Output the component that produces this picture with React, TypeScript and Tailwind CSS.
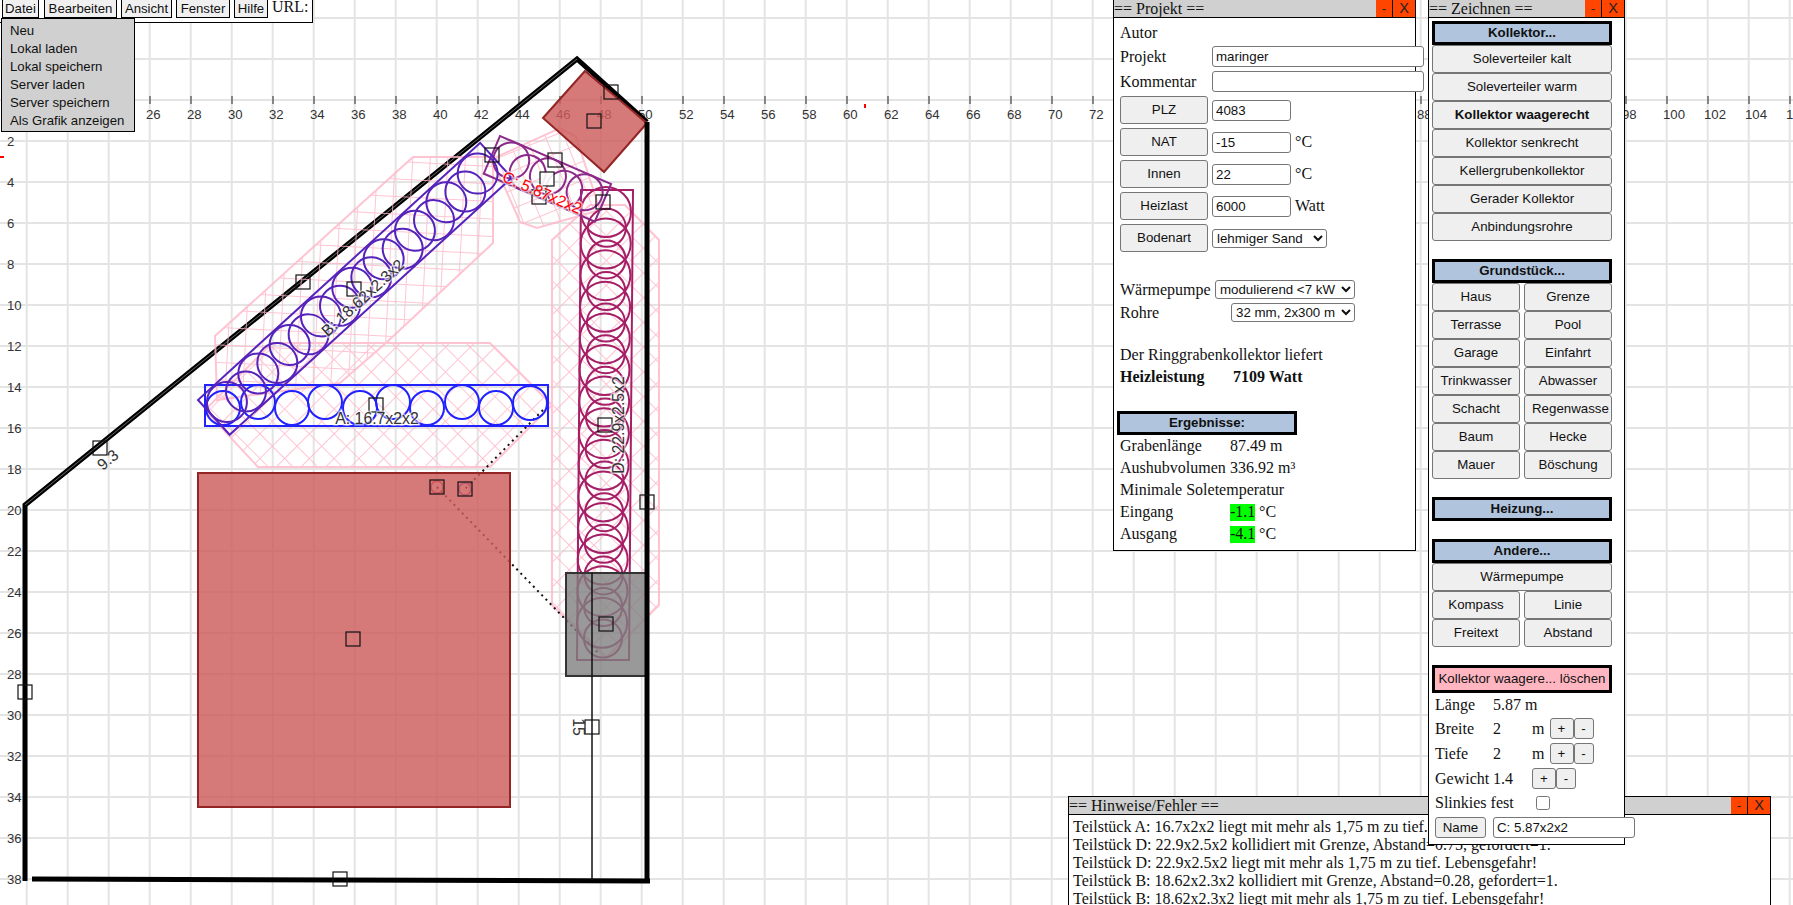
import React from "react";

const SANS = "[font-family:'Liberation_Sans',Arial,sans-serif] text-[13.3px] text-[#111]";
const SERIF = "[font-family:'Liberation_Serif','Times_New_Roman',serif] text-[16px] text-[#111]";
const BTN =
  "flex items-center justify-center whitespace-nowrap overflow-hidden shrink-0 rounded-[3px] border border-[#767676] bg-[#efefef] " +
  "[font-family:'Liberation_Sans',Arial,sans-serif] text-[13.3px] text-[#111]";
const INPUT =
  "rounded-[3px] border border-[#767676] bg-white px-[3px] [font-family:'Liberation_Sans',Arial,sans-serif] text-[13.3px] text-[#111] outline-none";
const SELECT =
  "rounded-[3px] border border-[#767676] bg-white [font-family:'Liberation_Sans',Arial,sans-serif] text-[13.3px] text-[#111] outline-none";
const HEAD =
  "flex items-center justify-center border-[3px] border-black bg-[#b0c4de] [font-family:'Liberation_Sans',Arial,sans-serif] text-[13.3px] font-bold text-[#111]";

const range = (from: number, to: number, step = 1) => {
  const out: number[] = [];
  for (let v = from; v <= to; v += step) out.push(v);
  return out;
};

const mx = (m: number) => -383 + m * 20.5;
const my = (m: number) => 100 + m * 20.5;

const handles: [number, number][] = [
  [100, 448],
  [25, 692],
  [340, 879],
  [303, 282],
  [354, 289],
  [492, 155],
  [555, 160],
  [539, 197],
  [603, 202],
  [611, 92],
  [594, 121],
  [376, 405],
  [605, 425],
  [647, 502],
  [437, 487],
  [465, 489],
  [606, 624],
  [353, 639],
  [592, 727],
];

const ringsA: [number, number][] = [
  [530, 403],
  [496, 408],
  [462, 402],
  [427, 408],
  [393, 402],
  [360, 408],
  [325, 402],
  [292, 408],
  [258, 402],
  [223, 408],
];

function Plan() {
  return (
    <svg className="absolute left-0 top-0" width={1793} height={905}>
      <defs>
        <pattern id="hatchA" width="17.5" height="17.5" patternUnits="userSpaceOnUse" patternTransform="rotate(45)">
          <path d="M0 0H17.5M0 0V17.5" stroke="#ffb6c8" strokeWidth="2" fill="none" />
        </pattern>
        <pattern id="hatchB" width="17.5" height="17.5" patternUnits="userSpaceOnUse" patternTransform="rotate(3)">
          <path d="M0 0H17.5M0 0V17.5" stroke="#ffb6c8" strokeWidth="2" fill="none" />
        </pattern>
        <pattern id="hatchC" width="17.5" height="17.5" patternUnits="userSpaceOnUse" patternTransform="rotate(68)">
          <path d="M0 0H17.5M0 0V17.5" stroke="#ffb6c8" strokeWidth="2" fill="none" />
        </pattern>
      </defs>

      {/* grid */}
      {range(0, 43).map((i) => (
        <line key={i} x1={26.7 + i * 41} x2={26.7 + i * 41} y1={0} y2={905} stroke="#e4e4e4" strokeWidth={2} />
      ))}
      {range(0, 22).map((i) => (
        <line key={i} x1={0} x2={1793} y1={18 + i * 41} y2={18 + i * 41} stroke="#e4e4e4" strokeWidth={2} />
      ))}

      {/* rulers */}
      {range(26, 106, 2).map((m) => (
        <g key={m}>
          <line x1={mx(m)} x2={mx(m)} y1={96} y2={104} stroke="#222" strokeWidth={1} />
          <text x={mx(m) - 4} y={119} fontFamily="Liberation Sans" fontSize={13.2} fill="#333">
            {m}
          </text>
        </g>
      ))}
      {range(2, 38, 2).map((m) => (
        <text key={m} x={7} y={my(m) + 5} fontFamily="Liberation Sans" fontSize={13.2} fill="#333">
          {m}
        </text>
      ))}
      <rect x={0} y={156} width={4} height={2} fill="#f00" />
      <rect x={864} y={104} width={2} height={4} fill="#f00" />

      {/* boundary, the frost zones lie over its diagonal */}
      <polyline points="25,881 25,505 577,59 647,122" fill="none" stroke="#000" strokeWidth={5} strokeLinejoin="miter" />
      <polyline points="25,505 577,59" fill="none" stroke="#666" strokeWidth={1} />

      {/* frost zones */}
      <g opacity={0.8}>
        <polygon points="272,343 490,343 552,405 490,467 258,467 205,410" fill="url(#hatchA)" stroke="#ffb6c8" strokeWidth={2} />
        <polygon points="215,336 413,157 493,157 493,243 387,342 340,383 217,400" fill="url(#hatchB)" stroke="#ffb6c8" strokeWidth={2} />
        <polygon points="560,128 576,137 600,210 537,228 520,222 505,188 490,160" fill="url(#hatchC)" stroke="#ffb6c8" strokeWidth={2} />
        <polygon points="552,240 590,205 625,205 659,240 659,605 606,658 552,605" fill="url(#hatchA)" stroke="#ffb6c8" strokeWidth={2} />
      </g>

      {/* connection lines */}
      <line x1={543} y1={410} x2={465} y2={489} stroke="#111" strokeWidth={2} strokeDasharray="2 4" />
      <line x1={437} y1={487} x2={600} y2={655} stroke="#111" strokeWidth={2} strokeDasharray="2 4" />
      <circle cx={437} cy={487} r={6} fill="none" stroke="#e02030" strokeWidth={1.5} />
      <circle cx={465} cy={489} r={6} fill="none" stroke="#8030a0" strokeWidth={1.5} />

      {/* collector A */}
      <rect x={205} y={385} width={343} height={41} fill="none" stroke="#2222ff" strokeWidth={2} />
      {ringsA.map(([cx, cy]) => (
        <circle key={cx} cx={cx} cy={cy} r={17} fill="none" stroke="#2222ff" strokeWidth={2} />
      ))}

      {/* collector D */}
      <polygon points="581,190 633,190 629,660 577,660" fill="none" stroke="#a61e66" strokeWidth={2} />
      {range(0, 27).map((i) => (
        <circle key={i} cx={607 - i * 0.15 + (i % 2 ? 0 : -1)} cy={212 + i * 15.8} r={i % 2 ? 19 : 25} fill="none" stroke="#a61e66" strokeWidth={2} />
      ))}

      {/* collector C */}
      <g transform="translate(500,136) rotate(23.4)">
        <rect width={121} height={41} fill="none" stroke="#8b2a8a" strokeWidth={2} />
        {range(0, 4).map((i) => (
          <circle key={i} cx={20 + i * 20} cy={i % 2 ? 23 : 18} r={18} fill="none" stroke="#8b2a8a" strokeWidth={2} />
        ))}
      </g>

      {/* collector B */}
      <g transform="translate(198,400) rotate(-42.34)">
        <rect width={381.7} height={47} fill="none" stroke="#5522bb" strokeWidth={2} />
        {range(0, 16).map((i) => (
          <circle key={i} cx={20 + i * 21.2} cy={i % 2 ? 26 : 21} r={20} fill="none" stroke="#5522bb" strokeWidth={2} />
        ))}
      </g>

      {/* house, garage and shaft */}
      <rect x={198} y={473} width={312} height={334} fill="#cd5c5c" fillOpacity={0.82} stroke="#932525" strokeWidth={2} />
      <polygon points="585,71 647,123 604,172 543,118" fill="#cd5c5c" fillOpacity={0.82} stroke="#932525" strokeWidth={2} />
      <rect x={566} y={573} width={81} height={103} fill="#808080" fillOpacity={0.8} stroke="#333" strokeWidth={2} />

      {/* rest of the boundary */}
      <polyline points="647,122 647,881" fill="none" stroke="#000" strokeWidth={5} />
      <line x1={32} y1={879} x2={650} y2={881} stroke="#000" strokeWidth={5} />
      <line x1={592} y1={573} x2={592} y2={880} stroke="#111" strokeWidth={1.5} />

      {/* handles */}
      <rect x={540} y={172} width={14} height={14} fill="#fff" fillOpacity={0.9} stroke="#111" strokeWidth={1.2} />
      {handles.map(([x, y]) => (
        <rect key={`${x}-${y}`} x={x - 7} y={y - 7} width={14} height={14} fill="none" stroke="#111" strokeWidth={1.2} />
      ))}

      {/* labels */}
      <g fontFamily="Liberation Sans" fontSize={15.8} textAnchor="middle" paintOrder="stroke" stroke="#ffffff" strokeOpacity={0.6} strokeWidth={3}>
        <text x={377} y={424} fill="#333">
          A: 16.7x2x2
        </text>
        <text transform="translate(363,298) rotate(-42.3)" y={5} fill="#333">
          B: 18.62x2.3x2
        </text>
        <text transform="translate(542,193) rotate(23.4)" y={5} fill="#f00">
          C: 5.87x2x2
        </text>
        <text transform="translate(619,425) rotate(-90)" y={5} fill="#333">
          D: 22.9x2.5x2
        </text>
      </g>
      <g fontFamily="Liberation Sans" fontSize={15.8} textAnchor="middle" fill="#333">
        <text transform="translate(108,460) rotate(-40)" y={5}>
          9.3
        </text>
        <text transform="translate(578,727) rotate(90)" y={5}>
          15
        </text>
      </g>
    </svg>
  );
}

function MenuBar() {
  const menus = [
    ["Datei", "w-[37px] mr-[5px]"],
    ["Bearbeiten", "w-[73px] mr-[4px]"],
    ["Ansicht", "w-[51px] mr-[4px]"],
    ["Fenster", "w-[54px] mr-[4px]"],
    ["Hilfe", "w-[34px] mr-[4px]"],
  ];
  return (
    <div className="absolute left-0 top-[-1px] flex h-[24px] w-[313px] border-b border-r border-black bg-white pl-[2px]">
      {menus.map(([label, box]) => (
        <div
          key={label}
          className={`${box} flex h-[19px] items-center justify-center border border-black bg-[#f0f0f0] [font-family:'Liberation_Sans',Arial,sans-serif] text-[13.2px] text-[#111]`}
        >
          {label}
        </div>
      ))}
      <span className={`${SERIF} leading-[16px]`}>URL:</span>
    </div>
  );
}

function FileMenu() {
  return (
    <ul className="absolute left-[1px] top-[18px] flex h-[114px] w-[134px] flex-col border border-black bg-[#d0d0d0] pl-[8px] pt-[3px] [font-family:'Liberation_Sans',Arial,sans-serif] text-[13.2px] leading-[18px] text-[#111]">
      {["Neu", "Lokal laden", "Lokal speichern", "Server laden", "Server speichern", "Als Grafik anzeigen"].map((item) => (
        <li key={item}>{item}</li>
      ))}
    </ul>
  );
}

function TitleBar({ title, className = "" }: { title: string; className?: string }) {
  return (
    <div className={`flex h-[18px] items-stretch border-b border-black bg-[#d0d0d0] ${className}`}>
      <span className={`${SERIF} flex-1 leading-[17px]`}>{title}</span>
      <span className="flex w-[17px] items-center justify-center border-r border-black bg-[#ff4500] [font-family:'Liberation_Sans',Arial,sans-serif] text-[13.3px] text-[#222]">
        -
      </span>
      <span className="flex w-[22px] items-center justify-center bg-[#ff4500] [font-family:'Liberation_Sans',Arial,sans-serif] text-[14.5px] text-[#222]">
        X
      </span>
    </div>
  );
}

function ValueRow({ button, value, unit }: { button: string; value?: string; unit?: string }) {
  return (
    <div className="mt-[4px] flex h-[28px] items-center">
      <button className={`${BTN} h-[28px] w-[88px]`}>{button}</button>
      {value !== undefined && <input readOnly value={value} className={`${INPUT} ml-[4px] h-[21px] w-[79px]`} />}
      {unit && <span className={`${SERIF} ml-[4px]`}>{unit}</span>}
    </div>
  );
}

function ProjectWindow() {
  return (
    <section className="absolute left-[1113px] top-[-1px] flex h-[552px] w-[303px] flex-col border border-black bg-white">
      <TitleBar title="== Projekt ==" />
      <div className="flex flex-col pl-[6px]">
        <div className={`${SERIF} mt-[4px] flex h-[22px] items-center`}>Autor</div>
        <div className="mt-[2px] flex h-[21px] items-center">
          <span className={`${SERIF} w-[92px] shrink-0`}>Projekt</span>
          <input readOnly value="maringer" className={`${INPUT} h-[21px] w-[212px] shrink-0`} />
        </div>
        <div className="mt-[4px] flex h-[21px] items-center">
          <span className={`${SERIF} w-[92px] shrink-0`}>Kommentar</span>
          <input readOnly value="" className={`${INPUT} h-[21px] w-[212px] shrink-0`} />
        </div>
        <ValueRow button="PLZ" value="4083" />
        <ValueRow button="NAT" value="-15" unit="°C" />
        <ValueRow button="Innen" value="22" unit="°C" />
        <ValueRow button="Heizlast" value="6000" unit="Watt" />
        <div className="mt-[4px] flex h-[28px] items-center">
          <button className={`${BTN} h-[28px] w-[88px]`}>Bodenart</button>
          <select defaultValue="lehmiger Sand" className={`${SELECT} ml-[4px] h-[19px] w-[115px]`}>
            <option>lehmiger Sand</option>
          </select>
        </div>
        <div className="mt-[28px] flex h-[19px] w-[235px] items-center justify-between">
          <span className={SERIF}>Wärmepumpe</span>
          <select defaultValue="modulierend <7 kW" className={`${SELECT} h-[19px] w-[140px]`}>
            <option>modulierend &lt;7 kW</option>
          </select>
        </div>
        <div className="mt-[4px] flex h-[19px] w-[235px] items-center justify-between">
          <span className={SERIF}>Rohre</span>
          <select defaultValue="32 mm, 2x300 m" className={`${SELECT} h-[19px] w-[124px]`}>
            <option>32 mm, 2x300 m</option>
          </select>
        </div>
        <div className={`${SERIF} mt-[22px] flex h-[22px] items-center`}>Der Ringgrabenkollektor liefert</div>
        <div className={`${SERIF} flex h-[22px] items-center font-bold`}>
          <span className="w-[113px]">Heizleistung</span>
          <span>7109 Watt</span>
        </div>
        <div className={`${HEAD} ml-[-3px] mt-[23px] h-[24px] w-[180px]`}>Ergebnisse:</div>
        <div className={`${SERIF} flex h-[22px] items-center`}>
          <span className="w-[110px]">Grabenlänge</span>
          <span>87.49 m</span>
        </div>
        <div className={`${SERIF} flex h-[22px] items-center`}>
          <span className="w-[110px] whitespace-nowrap">Aushubvolumen</span>
          <span>336.92 m³</span>
        </div>
        <div className={`${SERIF} flex h-[22px] items-center`}>Minimale Soletemperatur</div>
        <div className={`${SERIF} flex h-[22px] items-center`}>
          <span className="w-[110px]">Eingang</span>
          <span className="flex h-[17px] w-[25px] items-center bg-[#00ff00]">-1.1</span>
          <span className="ml-[4px]">°C</span>
        </div>
        <div className={`${SERIF} flex h-[22px] items-center`}>
          <span className="w-[110px]">Ausgang</span>
          <span className="flex h-[17px] w-[25px] items-center bg-[#00ff00]">-4.1</span>
          <span className="ml-[4px]">°C</span>
        </div>
      </div>
    </section>
  );
}

function StepRow({ label, value, unit }: { label: string; value: string; unit?: string }) {
  return (
    <div className="mt-[4px] flex h-[21px] items-center pl-[3px]">
      <span className={`${SERIF} w-[58px] shrink-0`}>{label}</span>
      <span className={`${SERIF} w-[39px] shrink-0`}>{value}</span>
      {unit && <span className={`${SERIF} w-[17.5px] shrink-0`}>{unit}</span>}
      <button className={`${BTN} h-[21px] w-[24px]`}>+</button>
      <button className={`${BTN} h-[21px] w-[20px]`}>-</button>
    </div>
  );
}

function DrawWindow() {
  const collectors = ["Soleverteiler kalt", "Soleverteiler warm", "Kollektor waagerecht", "Kollektor senkrecht", "Kellergrubenkollektor", "Gerader Kollektor", "Anbindungsrohre"];
  const ground = ["Haus", "Grenze", "Terrasse", "Pool", "Garage", "Einfahrt", "Trinkwasser", "Abwasser", "Schacht", "Regenwasser", "Baum", "Hecke", "Mauer", "Böschung"];
  return (
    <section className="absolute left-[1428px] top-[-1px] flex h-[846px] w-[197px] flex-col border border-black bg-white">
      <TitleBar title="== Zeichnen ==" />
      <div className="flex flex-col px-[3px] pt-[3px]">
        <div className={`${HEAD} h-[24px] w-[180px]`}>Kollektor...</div>
        {collectors.map((label) => (
          <button key={label} className={`${BTN} h-[28px] w-[180px] ${label === "Kollektor waagerecht" ? "font-bold" : ""}`}>
            {label}
          </button>
        ))}
        <div className={`${HEAD} mt-[18px] h-[24px] w-[180px]`}>Grundstück...</div>
        <div className="grid w-[180px] grid-cols-[88px_88px] gap-x-[4px]">
          {ground.map((label) =>
            label === "Regenwasser" ? (
              <button key={label} className={`${BTN} h-[28px] justify-start pl-[7px]`}>
                <span className="block w-[77px] overflow-hidden">{label}</span>
              </button>
            ) : (
              <button key={label} className={`${BTN} h-[28px]`}>
                {label}
              </button>
            ),
          )}
        </div>
        <div className={`${HEAD} mt-[18px] h-[24px] w-[180px]`}>Heizung...</div>
        <div className={`${HEAD} mt-[18px] h-[24px] w-[180px]`}>Andere...</div>
        <button className={`${BTN} h-[28px] w-[180px]`}>Wärmepumpe</button>
        <div className="grid w-[180px] grid-cols-[88px_88px] gap-x-[4px]">
          {["Kompass", "Linie", "Freitext", "Abstand"].map((label) => (
            <button key={label} className={`${BTN} h-[28px]`}>
              {label}
            </button>
          ))}
        </div>
        <div className="mt-[18px] flex h-[28px] w-[180px] items-center justify-center whitespace-nowrap border-[3px] border-black bg-[#ffb6c1] [font-family:'Liberation_Sans',Arial,sans-serif] text-[13.3px] text-[#111]">
          Kollektor waagere... löschen
        </div>
        <div className={`${SERIF} flex h-[23px] items-center pl-[3px]`}>
          <span className="w-[58px]">Länge</span>
          <span>5.87 m</span>
        </div>
        <div className="mt-[-2px]">
          <StepRow label="Breite" value="2" unit="m" />
        </div>
        <StepRow label="Tiefe" value="2" unit="m" />
        <StepRow label="Gewicht" value="1.4" />
        <div className={`${SERIF} mt-[4px] flex h-[20px] items-center pl-[3px]`}>
          <span className="w-[101px] shrink-0">Slinkies fest</span>
          <input type="checkbox" className="h-[14px] w-[14px]" />
        </div>
        <div className="mt-[4px] flex h-[21px] items-center pl-[3px]">
          <button className={`${BTN} h-[21px] w-[51px]`}>Name</button>
          <input readOnly value="C: 5.87x2x2" className={`${INPUT} ml-[7px] h-[21px] w-[142px] shrink-0`} />
        </div>
      </div>
    </section>
  );
}

function HintsWindow() {
  const hints = [
    "Teilstück A: 16.7x2x2 liegt mit mehr als 1,75 m zu tief. Lebensgefahr!",
    "Teilstück D: 22.9x2.5x2 kollidiert mit Grenze, Abstand=0.75, gefordert=1.",
    "Teilstück D: 22.9x2.5x2 liegt mit mehr als 1,75 m zu tief. Lebensgefahr!",
    "Teilstück B: 18.62x2.3x2 kollidiert mit Grenze, Abstand=0.28, gefordert=1.",
    "Teilstück B: 18.62x2.3x2 liegt mit mehr als 1,75 m zu tief. Lebensgefahr!",
  ];
  return (
    <section className="absolute left-[1068px] top-[796px] h-[140px] w-[703px] border border-black bg-white">
      <TitleBar title="== Hinweise/Fehler ==" />
      <div className="pl-[4px] pt-[3px]">
        {hints.map((hint) => (
          <p key={hint} className={`${SERIF} whitespace-nowrap leading-[18px]`}>
            {hint}
          </p>
        ))}
      </div>
    </section>
  );
}

export default function App() {
  return (
    <div className="relative h-[905px] w-[1793px] overflow-hidden bg-white">
      <Plan />
      <MenuBar />
      <FileMenu />
      <ProjectWindow />
      <HintsWindow />
      <DrawWindow />
    </div>
  );
}
